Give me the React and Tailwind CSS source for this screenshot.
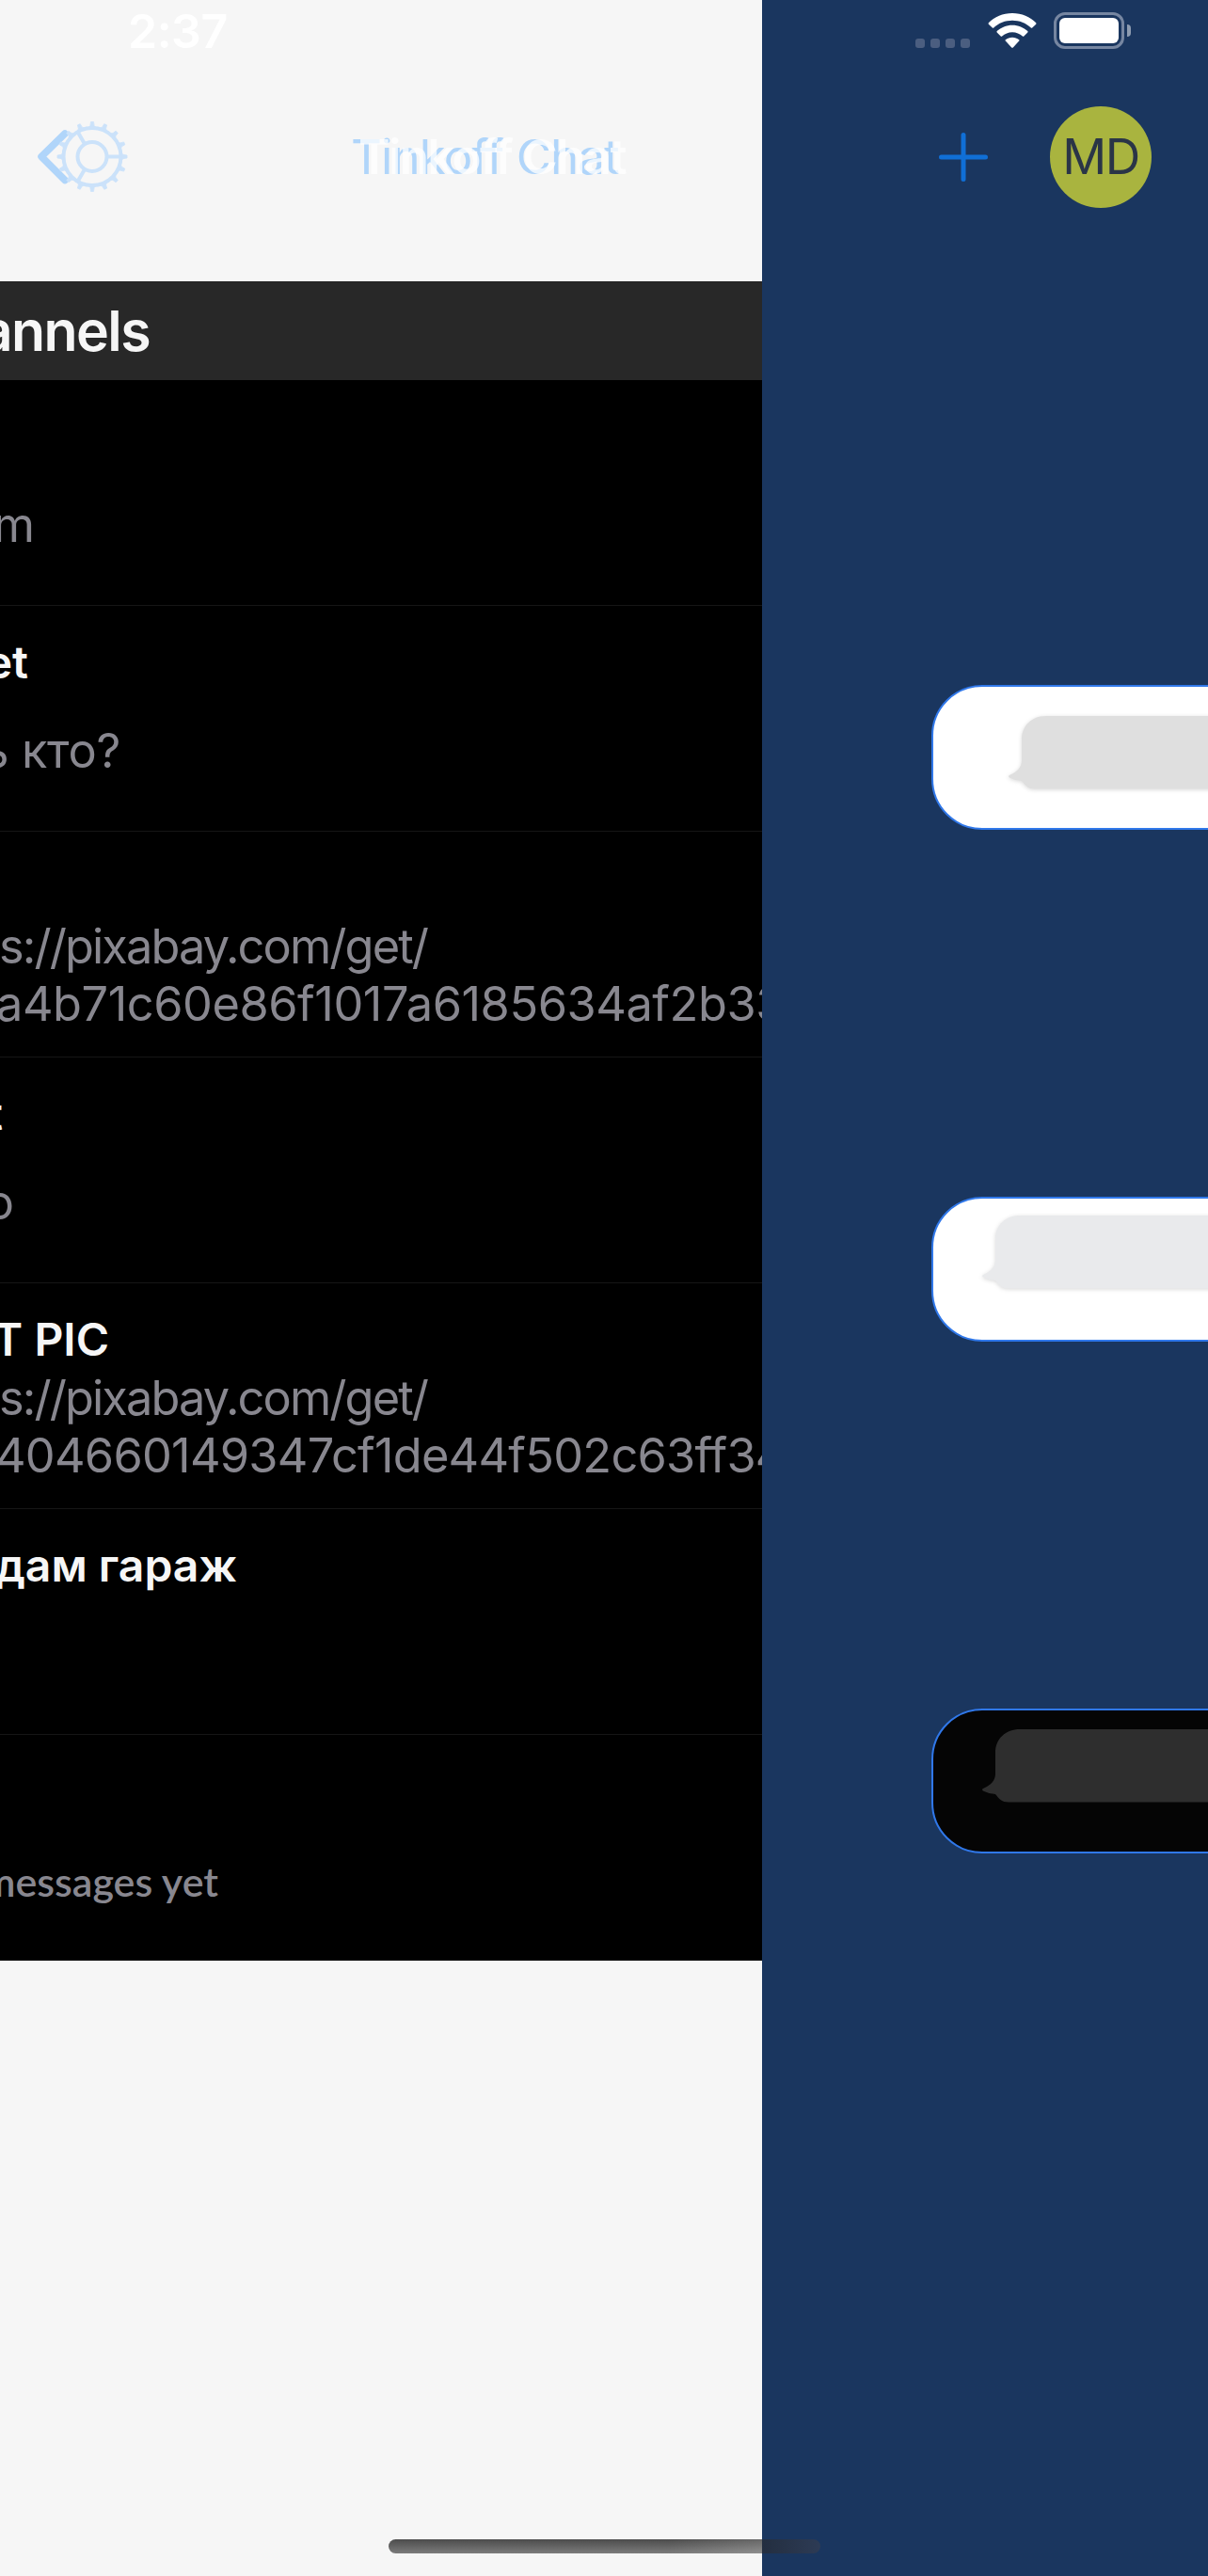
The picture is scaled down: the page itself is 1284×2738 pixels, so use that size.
const rows = [
  { title: '', lines: ['m'], offset: 'w-[37px]' },
  { title: 'et', titleWidth: 'w-[30px]', lines: ['ь кто?'], offset: 'w-[128px] tracking-[-0.3px]' },
  { title: '', url: true, tracking: '-ml-[4px] tracking-[-0.45px]', lines: ['s://pixabay.com/get/', 'a4b71c60e86f1017a6185634af2b33'] },
  { title: 't', titleWidth: 'w-[3px]', lines: ['о'], offset: 'w-[15px]' },
  { title: 'T PIC', titleWidth: 'w-[116px]', url: true, tracking: '-ml-[5px] tracking-[-0.75px]', lines: ['s://pixabay.com/get/', '404660149347cf1de44f502c63ff34'] },
  { title: 'дам гараж', titleWidth: 'w-[252px]', lines: [] },
  { title: '', empty: true, lines: ['messages yet'], offset: 'w-[232px]' },
];

function Row({ row }) {
  return (
    <li className="h-[240px] shrink-0 border-b border-[#161616] pt-[29px]">
      <div className={`flex h-[61px] justify-end whitespace-nowrap text-[48px] leading-[61px] font-semibold text-[#f6f6f6] ${row.titleWidth || ''}`}>
        <span>{row.title}</span>
      </div>
      <div className={`flex flex-col justify-center text-[50.5px] leading-[61px] text-[#88878f] ${row.url ? 'h-[124px]' : 'h-[127px]'}`}>
        {row.lines.map((line, i) =>
          row.url ? (
            <div key={line} className={`whitespace-nowrap ${i === 0 ? '-ml-px tracking-[-1.9px]' : row.tracking}`}>{line}</div>
          ) : (
            <div key={line} className={`flex justify-end whitespace-nowrap ${row.offset} ${row.empty ? "pt-[3px] font-['Lato'] text-[43px] font-semibold" : ''}`}>
              <span>{line}</span>
            </div>
          )
        )}
      </div>
    </li>
  );
}

function BackAndGear() {
  const teeth = Array.from({ length: 16 }, (_, i) => i * 22.5);
  return (
    <svg className="ml-[36px] h-[80px] w-[104px]" viewBox="36 126.5 104 80" fill="none">
      <path d="M69 142.500 44 167l25 25" stroke="#b0d5fa" strokeWidth="7.5" strokeLinecap="round" strokeLinejoin="round" />
      <g stroke="#cbe2fa" strokeWidth="4">
        <circle cx="98" cy="167" r="30.5" />
        <circle cx="98" cy="167" r="15.5" />
        <path d="M113.500 167h16M90 153.500l-7.500-13M90 180.500l-7.500 13" />
        {teeth.map((a) => (
          <path key={a} d="M129 163q1 2.500 6 2.500v3q-5 0-6 2.500Z" fill="#cbe2fa" strokeWidth="0.8" transform={`rotate(${a} 98 167)`} />
        ))}
      </g>
    </svg>
  );
}

function Bubble({ className, color }) {
  return (
    <svg className={`block h-[90px] w-[300px] shrink-0 ${className}`} viewBox="0 0 300 90" fill={color}>
      <path d="M300 2H42C27 2 16 12 16 27v22c0 8-5 12-12 15.500q-4 1.500 0 3.500 6 3 12 3c4 5 7 8.500 14 8.500H300Z" />
    </svg>
  );
}

function ThemeCard({ children, className }) {
  return <div className={`ml-[180px] h-[154px] w-[400px] shrink-0 overflow-hidden rounded-[54px] border-2 border-[#3078ea] ${className}`}>{children}</div>;
}

export default function App() {
  return (
    <div className="relative flex h-[2738px] w-[1284px] overflow-hidden font-['Inter',sans-serif]">
      <main className="flex w-[810px] shrink-0 flex-col overflow-hidden bg-[#f6f6f6]">
        <header className="h-[299px] shrink-0">
          <div className="flex h-[126px] pt-[3px] pl-[136px] text-[50px] leading-[61px] font-semibold tracking-[-0.5px] text-white">2:37</div>
          <div className="flex h-[80px] items-center">
            <BackAndGear />
            <div className="relative ml-[233px] text-[51px] leading-[61px] whitespace-nowrap text-[#b0d5fa]">
              <span className="tracking-[-0.9px]">Tinkoff Chat</span>
              <span className="absolute top-0 left-[8px] font-semibold tracking-[-1.65px] text-white/75">Tinkoff Chat</span>
            </div>
          </div>
        </header>
        <div className="h-[105px] shrink-0 border-t border-[#222] bg-[#282828] pt-[14px]">
          <div className="flex w-[159px] justify-end text-[59px] leading-[76px] font-semibold tracking-[-1.6px] text-[#f6f6f6]">
            <span>annels</span>
          </div>
        </div>
        <ul className="flex flex-col bg-black">
          {rows.map((row, i) => (
            <Row key={i} row={row} />
          ))}
        </ul>
      </main>
      <aside className="flex w-[474px] shrink-0 flex-col overflow-hidden bg-[#1a365f]">
        <div className="flex h-[66px] shrink-0">
          <div className="mt-[41px] ml-[163px] flex gap-[6px]">
            {[0, 1, 2, 3].map((i) => (
              <i key={i} className="size-[10px] rounded-[3px] bg-[#4b5e80]" />
            ))}
          </div>
          <svg className="mt-[13px] ml-[19px] h-[39px] w-[52px] shrink-0" viewBox="0 0 52 39" fill="#fff">
            <path d="M26 1C16 1 7 5 .8 11.300c-.4.4-.4 1 0 1.400l4 3.800c.4.4 1 .4 1.400 0C11.500 11.500 18.500 8.800 26 8.800s14.500 2.700 19.800 7.700c.4.4 1 .4 1.400 0l4-3.800c.4-.4.4-1 0-1.400C45 5 36 1 26 1Z" />
            <path d="M26 13.700c-6.400 0-12 2.500-16.300 6.400-.4.4-.4 1 0 1.400l4 4c.4.4 1 .4 1.400 0 2.900-2.600 6.700-4.200 10.900-4.200s8 1.600 10.900 4.200c.4.4 1 .4 1.400 0l4-4c.4-.4.4-1 0-1.400C38 16.200 32.400 13.700 26 13.700Z" />
            <path d="M26 26.700c-2.700 0-5.200 1-7.200 2.500-.4.4-.5 1 0 1.400l6.400 6.800c.4.5 1.200.5 1.600 0l6.400-6.800c.5-.4.4-1 0-1.400-2-1.500-4.500-2.500-7.200-2.500Z" />
          </svg>
          <div className="mt-[13px] ml-[18px] h-[39px] w-[75px] rounded-[12px] border-3 border-[#7686a1] p-[3px]">
            <div className="h-full rounded-[6px] bg-white" />
          </div>
          <div className="mt-[26px] ml-[3px] h-[13px] w-[4px] rounded-r-full bg-[#8d9bb0]" />
        </div>
        <div className="flex h-[202px] shrink-0 items-center">
          <svg className="ml-[188px] h-[52px] w-[52px]" viewBox="0 0 52 52" stroke="#106fd6" strokeWidth="5" strokeLinecap="round">
            <path d="M26 2.500v47M2.500 26h47" />
          </svg>
          <div className="ml-[66px] flex size-[108px] items-center justify-center rounded-full bg-[#a9b43f] text-[52px] tracking-[-1.5px] text-[#2a3547]">MD</div>
        </div>
        <ThemeCard className="mt-[460px] bg-white">
          <Bubble className="mt-[29px] ml-[78px] drop-shadow-sm" color="#dfdfdf" />
        </ThemeCard>
        <ThemeCard className="mt-[390px] bg-white">
          <Bubble className="mt-[16px] ml-[50px] drop-shadow-sm" color="#e9eaec" />
        </ThemeCard>
        <ThemeCard className="mt-[390px] bg-[#050505]">
          <Bubble className="mt-[18px] ml-[50px]" color="#2e2e2e" />
        </ThemeCard>
      </aside>
      <div className="absolute top-[2699px] left-[413px] flex h-[15px] w-[459px] overflow-hidden rounded-full">
        <div className="h-full w-[397px] bg-linear-to-b from-[#4c4c4c] to-[#7c7c7c]">
          <div className="ml-auto h-full w-[100px] bg-linear-to-r from-white/0 to-white/15" />
        </div>
        <div className="h-full flex-1 bg-linear-to-r from-[#232e40] to-[#2d3b55]" />
      </div>
    </div>
  );
}
